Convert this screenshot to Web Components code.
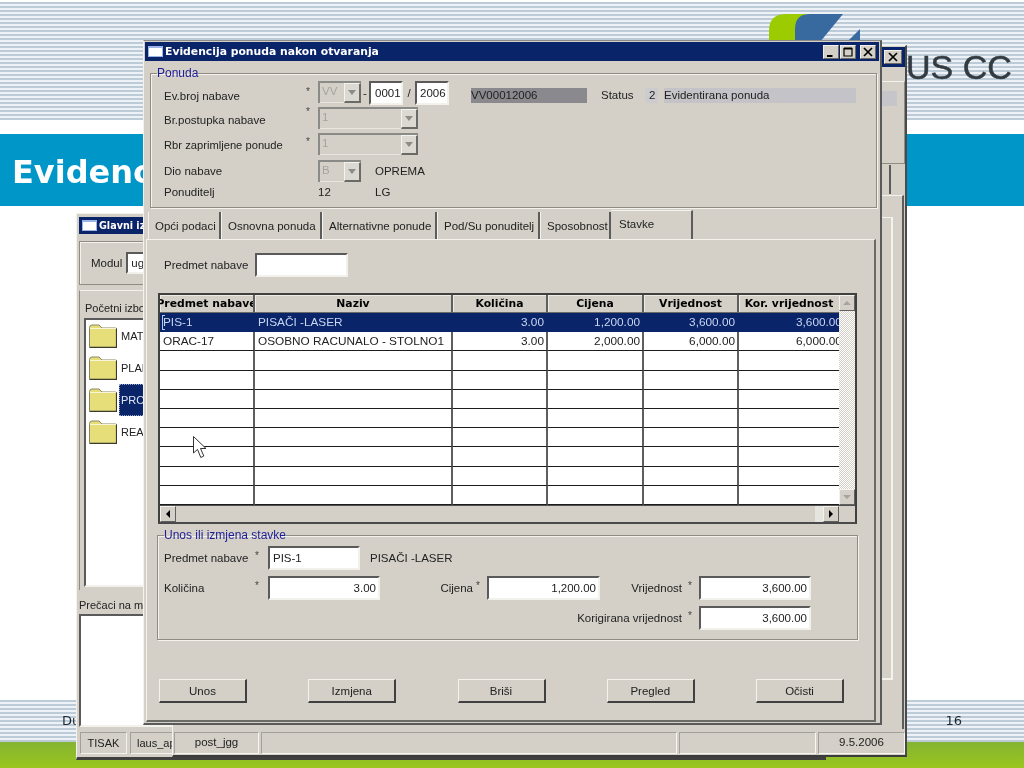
<!DOCTYPE html>
<html lang="hr">
<head>
<meta charset="utf-8">
<title>Evidencija ponuda</title>
<style>
  html, body { margin: 0; padding: 0; background: #fff; }
  body { font: 11.5px/14px "Liberation Sans", Arial, sans-serif; color: #222; }
  #stage { position: relative; width: 1024px; height: 768px; overflow: hidden; filter: blur(0.35px); }
</style>
</head>
<body>
<div id="stage">
  <slide-back></slide-back>
  <menu-window style="left:76px;top:213px"></menu-window>
  <back-window style="left:172px;top:45px"></back-window>
  <offer-window style="left:143px;top:40px"></offer-window>
  <mouse-arrow style="left:193px;top:436px"></mouse-arrow>
</div>

<script>
(() => {
    // small helper, every element is just a template cloned into an open shadow root
    function define(name, html, init) {
        let template = document.createElement("template");
        template.innerHTML = html;
        customElements.define(name, class extends HTMLElement {
            constructor() {
                super();
                this.attachShadow({mode: 'open'});
            }
            connectedCallback() {
                if (this.shadowRoot.childNodes.length) return;
                this.shadowRoot.appendChild(template.content.cloneNode(true));
                if (init) init(this, this.shadowRoot);
            }
        });
    }

    const FACE = "#d4d0c8";
    const NAVY = "#0a246a";

    // ---------- win32 bits ----------

    define("x-input", `
    <style>
    :host {
        display: flex; align-items: center; box-sizing: border-box; height: 24px;
        background: #fff; padding: 0 2px 1px 3px; overflow: hidden; white-space: nowrap;
        border: 2px solid; border-color: #5a5a5a #f2f1ec #f2f1ec #5a5a5a;
    }
    :host([right]) { justify-content: flex-end; }
    </style>
    <slot></slot>
    `);

    // disabled combo: only the arrow button gets the dark right and bottom edge
    define("x-combo", `
    <style>
    :host {
        display: flex; box-sizing: border-box; height: 22px; background: ${FACE}; color: #a4a4a0;
        border: solid; border-width: 2px 0 0 2px; border-color: #8a8a86;
        box-shadow: inset 0 -1px 0 #e8e6e0;
    }
    span { flex: 1; padding-left: 2px; line-height: 17px; overflow: hidden; }
    b {
        width: 17px; display: flex; align-items: center; justify-content: center;
        border: solid; border-width: 1px 2px 2px 1px; border-color: #f4f3ee #6a6a66 #6a6a66 #f4f3ee; box-sizing: border-box;
        background: #dcd9d2;
    }
    b::after {
        content: ""; border: 4px solid transparent; border-top: 5px solid #8c8c88; border-bottom: 0;
    }
    </style>
    <span><slot></slot></span><b></b>
    `);

    define("x-btn", `
    <style>
    :host {
        display: flex; align-items: center; justify-content: center; box-sizing: border-box;
        width: 88px; height: 24px; background: ${FACE};
        border: 2px solid; border-color: #f3f2ed #404040 #404040 #f3f2ed; border-width: 1px 2px 2px 1px;
    }
    </style>
    <slot></slot>
    `);

    // group box, the legend breaks the line by itself
    define("x-group", `
    <style>
    :host { display: block; box-sizing: border-box; }
    fieldset {
        margin: 0; height: 100%; box-sizing: border-box; padding: var(--pad, 1px 0 0 13px);
        border: 1px solid #908c84; box-shadow: 1px 1px 0 #f3f2ed, inset 1px 1px 0 #f3f2ed;
    }
    legend { padding: 0; margin-left: var(--leg, -7px); color: #1c1c96; line-height: 14px; font-size: 12px; }
    </style>
    <fieldset><legend><slot name="legend"></slot></legend><slot></slot></fieldset>
    `);

    define("x-tab", `
    <style>
    :host {
        display: flex; align-items: center; box-sizing: border-box; height: 27px; padding-left: 6px;
        border-left: 1px solid #f3f2ed; border-right: 2px solid #5c5c5c; white-space: nowrap;
    }
    :host([active]) {
        height: 29px; padding: 0 0 3px 8px; border-left: 0; border-top: 1px solid #f3f2ed;
    }
    </style>
    <slot></slot>
    `);

    define("title-bar", `
    <style>
    :host {
        display: flex; align-items: center; height: var(--bar-h, 19px); background: ${NAVY}; color: #fff;
        font: bold 10.8px/14px "DejaVu Sans", sans-serif; white-space: nowrap; overflow: hidden;
    }
    .ico {
        width: 15px; height: 11px; flex: none; margin: 0 2px 0 3px; background: #fff;
        border: 1px solid #9db4e6; border-top-width: 2px; box-sizing: border-box;
    }
    .txt { flex: 1; }
    .btns { display: flex; gap: 1px; margin-right: 3px; }
    </style>
    <div class="ico"></div>
    <div class="txt"><slot></slot></div>
    <div class="btns"><slot name="btn"></slot></div>
    `);

    define("cap-btn", `
    <style>
    :host {
        display: block; width: var(--w, 16px); height: 14px; background: ${FACE};
        border: 1px solid; border-color: #f0efe9 #6a6a66 #6a6a66 #f0efe9; box-sizing: border-box;
    }
    :host([kind="close"]) { margin-left: var(--cl, 3px); }
    svg { display: block; width: 100%; height: 100%; }
    </style>
    <svg viewBox="0 0 13 12" fill="none" stroke="#000"></svg>
    `, (el, root) => {
        let glyphs = {
            min: '<path d="M2.5 10h5.5" stroke-width="2"/>',
            max: '<path d="M2.5 2.5h8v7.5h-8z" stroke-width="1.2"/><path d="M2.5 2.5h8" stroke-width="2"/>',
            close: '<path d="M2.5 2l8 8M10.5 2l-8 8" stroke-width="1.7"/>'
        };
        root.querySelector("svg").innerHTML = glyphs[el.getAttribute("kind")];
    });

    define("yellow-folder", `
    <style>
    :host { display: block; width: 28px; height: 24px; flex: none; }
    svg { display: block; }
    </style>
    <svg width="28" height="24" viewBox="0 0 28 24">
      <path d="M.5 23V3.500Q.5 1 3 1h7l3 3h13.500q1 0 1 1v18z" fill="#e6de78" stroke="#8a8660"/>
      <path d="M1 4.500h26" stroke="#f8f6d8"/>
      <path d="M27.500 4.500V23.500H.5" fill="none" stroke="#3c3a28" stroke-width="1.2"/>
    </svg>
    `);

    // ---------- the table ----------

    const COLS = [
        ["Predmet nabave", 95], ["Naziv", 198], ["Količina", 95],
        ["Cijena", 96], ["Vrijednost", 95], ["Kor. vrijednost", 100]
    ];
    const ROWS = [
        ["PIS-1", "PISAČI -LASER", "3.00", "1,200.00", "3,600.00", "3,600.00"],
        ["ORAC-17", "OSOBNO RACUNALO - STOLNO1", "3.00", "2,000.00", "6,000.00", "6,000.00"]
    ];

    define("x-grid", `
    <style>
    :host {
        display: grid; box-sizing: border-box; width: 699px; height: 231px; font-size: 11.8px;
        border: 2px solid #404040; border-bottom-color: #4a4a4a; background: ${FACE};
        grid-template-columns: 679px 16px; grid-template-rows: 210px 17px;
    }
    .cells {
        display: grid; background: #fff; overflow: hidden;
        grid-template-rows: 18px repeat(10, 19.2px);
    }
    .c {
        box-sizing: border-box; display: flex; align-items: center; white-space: nowrap; overflow: hidden;
        border-right: 2px solid #5e5e5e; border-bottom: 1px solid #1c1c1c; padding: 0 2px 0 3px; min-width: 0;
    }
    .c:nth-child(6n) { border-right: 0; justify-content: flex-start; }
    .h {
        background: ${FACE}; justify-content: center; padding: 0; color: #000;
        font: bold 10.8px/14px "DejaVu Sans", sans-serif; border-bottom: 1px solid #6a6a66;
        box-shadow: inset 1px 1px 0 #ecebe5;
    }
    .c.h:nth-child(6n) { justify-content: center; }
    .n { justify-content: flex-end; }
    .c.n:nth-child(6n) { justify-content: flex-start; padding-left: 57px; }
    .sel { background: ${NAVY}; color: #c9d6f2; border-bottom-color: ${NAVY}; border-right-color: ${NAVY}; }
    .sel.first::before { content: ""; width: 2px; height: 13px; margin-right: -2px; margin-left: -1px;
        border: 1px solid #b8c8ec; border-right: 0; }
    .vs {
        display: flex; flex-direction: column; justify-content: space-between;
        background: repeating-conic-gradient(${FACE} 0 25%, #fff 0 50%) 0 0 / 2px 2px;
    }
    .hs { display: flex; justify-content: space-between; background: ${FACE}; border-top: 1px solid #505050; }
    .sb {
        width: 16px; height: 16px; background: ${FACE}; display: flex; align-items: center; justify-content: center;
        box-sizing: border-box; border: 1px solid; border-color: #f3f2ed #606060 #606060 #f3f2ed;
    }
    .up::after { content: ""; border: 4px solid transparent; border-bottom: 4px solid #a4a4a0; border-top: 0; }
    .dn::after { content: ""; border: 4px solid transparent; border-top: 4px solid #a4a4a0; border-bottom: 0; }
    .lf::after { content: ""; border: 4px solid transparent; border-right: 4px solid #000; border-left: 0; }
    .rt::after { content: ""; border: 4px solid transparent; border-left: 4px solid #000; border-right: 0; }
    .rt { box-shadow: -8px 0 0 #e6e4de; }
    .corner { background: ${FACE}; border-top: 1px solid #505050; }
    </style>
    <div class="cells"></div>
    <div class="vs"><div class="sb up"></div><div class="sb dn"></div></div>
    <div class="hs"><div class="sb lf"></div><div class="sb rt"></div></div>
    <div class="corner"></div>
    `, (el, root) => {
        let cells = root.querySelector(".cells");
        cells.style.gridTemplateColumns = COLS.map(c => c[1] + "px").join(" ");
        let add = (text, cls) => {
            let d = document.createElement("div");
            d.className = "c " + cls;
            let s = document.createElement("span");
            s.textContent = text;
            d.appendChild(s);
            cells.appendChild(d);
        };
        COLS.forEach(c => add(c[0], "h"));
        for (let r = 0; r < 10; r++) {
            for (let i = 0; i < 6; i++) {
                let cls = (i > 1 ? "n" : "") + (r === 0 ? " sel" : "") + (r === 0 && i === 0 ? " first" : "");
                add(ROWS[r] ? ROWS[r][i] : "", cls);
            }
        }
    });

    // ---------- slide behind the windows ----------

    const STRIPES = "repeating-linear-gradient(180deg, #bccbd8 0 2px, #eef2f6 2px 4px)";

    define("slide-back", `
    <style>
    :host {
        display: grid; width: 1024px; height: 768px; position: relative; background: #fff;
        grid-template-rows: 120px 14px 72px 1fr 42px 26px;
    }
    .stripes { background: ${STRIPES}; }
    .top { position: relative; margin-top: 2px; }
    .logo { position: absolute; left: 765px; top: 10px; }
    .company {
        position: absolute; left: 906px; top: 46px; color: #333b40;
        font: 34px/38px "Liberation Sans", sans-serif; white-space: nowrap; -webkit-text-stroke: .5px #333b40;
    }
    .band {
        grid-row: 3; background: #0096c8; color: #fff; display: flex; align-items: center; padding: 4px 0 0 12px;
        font: bold 32px/38px "DejaVu Sans", sans-serif; box-sizing: border-box;
    }
    .foot {
        grid-row: 5; display: flex; justify-content: space-between; align-items: center; padding: 0 62px;
        font: 13px/16px "DejaVu Sans", sans-serif; color: #1b2833;
    }
    .green { grid-row: 6; background: linear-gradient(180deg, #84b432, #9ac61e); }
    </style>
    <div class="stripes top">
      <svg class="logo" width="100" height="34" viewBox="765 12 100 34">
        <path d="M786 14H806V42H769V31Q769 14 786 14Z" fill="#9ccb00"/>
        <path d="M810 14H843L820 42H795V29Q795 14 810 14Z" fill="#38699f"/>
        <path d="M860 29V42H847Z" fill="#38699f"/>
      </svg>
      <div class="company">US CC</div>
    </div>
    <div class="band">Evidenc</div>
    <div class="stripes foot"><span>Du</span><span>16</span></div>
    <div class="green"></div>
    `);

    // ---------- windows ----------

    define("menu-window", `
    <style>
    :host {
        position: absolute; display: flex; flex-direction: column; box-sizing: border-box;
        width: 750px; height: 547px; background: ${FACE}; padding: 3px 2px 0 2px;
        border: 1px solid; border-color: #f3f2ed #404040 #404040 #f3f2ed; border-bottom-width: 3px;
    }
    title-bar { --bar-h: 17px; font-size: 9.6px; }
    .modul {
        margin-top: 7px; height: 44px; display: flex; align-items: center; padding-left: 11px; gap: 4px;
        box-sizing: border-box; border: 1px solid #908c84; box-shadow: inset 1px 1px 0 #f3f2ed;
    }
    .modul x-input { width: 200px; height: 22px; }
    .panel {
        margin-top: 5px; height: 300px; box-sizing: border-box; border-left: 1px solid #908c84;
        border-top: 1px solid #f3f2ed; padding: 10px 0 0 4px; display: flex; flex-direction: column;
    }
    .panel > span { height: 17px; flex: none; padding-left: 1px; font-size: 11px; }
    .tree {
        height: 269px; flex: none; background: #fff; box-sizing: border-box; padding: 4px 0 0 3px; display: flex; flex-direction: column; gap: 8px;
        border: 2px solid; border-color: #5a5a5a #f2f1ec #f2f1ec #5a5a5a;
    }
    .item { display: flex; align-items: center; gap: 2px; height: 24px; white-space: nowrap; font-size: 11px; }
    .item span { padding: 0 2px; line-height: 32px; }
    .item.on span { background: ${NAVY}; color: #dfe6f6; outline: 1px dotted #9aa7c8; outline-offset: -1px; }
    .short { height: 24px; display: flex; align-items: center; padding-top: 6px; box-sizing: border-box; font-size: 11px; }
    .box {
        height: 113px; background: #fff; box-sizing: border-box;
        border: 2px solid; border-color: #5a5a5a #f2f1ec #f2f1ec #5a5a5a;
    }
    .task { display: flex; gap: 3px; margin-top: 5px; padding-left: 1px; font-size: 11px; }
    .task span {
        height: 22px; line-height: 21px; box-sizing: border-box; text-align: center; width: 47px;
        border: 1px solid; border-color: #a0a09c #f3f2ed #f3f2ed #a0a09c;
    }
    .task span + span { width: 200px; text-align: left; padding-left: 6px; }
    </style>
    <title-bar>Glavni iz</title-bar>
    <div class="modul"><span>Modul</span><x-input>ug</x-input></div>
    <div class="panel">
      <span>Početni izbo</span>
      <div class="tree">
        <div class="item"><yellow-folder></yellow-folder><span>MAT</span></div>
        <div class="item"><yellow-folder></yellow-folder><span>PLAN</span></div>
        <div class="item on"><yellow-folder></yellow-folder><span>PRO</span></div>
        <div class="item"><yellow-folder></yellow-folder><span>REA</span></div>
      </div>
    </div>
    <div class="short">Prečaci na mo</div>
    <div class="box"></div>
    <div class="task"><span>TISAK</span><span>laus_ap</span></div>
    `);

    define("back-window", `
    <style>
    :host {
        position: absolute; display: flex; flex-direction: column; box-sizing: border-box;
        width: 735px; height: 712px; background: ${FACE}; padding-top: 1px;
        border: 1px solid #f3f2ed; border-right: 2px solid #4a4a4a; border-bottom: 2px solid #3c3c3c;
    }
    title-bar { --bar-h: 20px; }
    cap-btn { --w: 18px; --cl: 0; }
    .grp {
        margin-top: 14px; height: 83px; box-sizing: border-box; border-right: 1px solid #908c84; border-bottom: 1px solid #908c84;
        border-top: 1px solid #f3f2ed; display: flex; justify-content: flex-end; align-items: flex-start; padding: 9px 7px 0 0;
    }
    .grp i { display: block; width: 200px; height: 15px; background: #c6c6ca; }
    .tabs { height: 31px; box-sizing: border-box; padding: 1px 14px 0 0; display: flex; justify-content: flex-end; }
    .tabs i { display: block; width: 2px; height: 29px; background: #5c5c5c; }
    .page {
        height: 534px; box-sizing: border-box; margin-right: 1px; padding: 21px 9px 0 0;
        border-top: 1px solid #f3f2ed; border-right: 2px solid #5c5c5c;
    }
    .inner { height: 463px; box-sizing: border-box; border: 1px solid #f3f2ed; border-width: 1px 2px 2px 1px; }
    .status { display: flex; gap: 2px; padding: 3px 0 0 1px; }
    .status span {
        height: 22px; box-sizing: border-box; text-align: center; line-height: 19px;
        border: 1px solid; border-color: #a0a09c #f7f6f1 #f7f6f1 #a0a09c;
    }
    </style>
    <title-bar><cap-btn slot="btn" kind="close"></cap-btn></title-bar>
    <div class="grp"><i></i></div>
    <div class="tabs"><i></i></div>
    <div class="page"><div class="inner"></div></div>
    <div class="status">
      <span style="width:85px">post_jgg</span>
      <span style="width:416px"></span>
      <span style="width:137px"></span>
      <span style="width:87px">9.5.2006</span>
    </div>
    `);

    define("offer-window", `
    <style>
    :host {
        position: absolute; display: flex; flex-direction: column; box-sizing: border-box;
        width: 739px; height: 685px; background: ${FACE}; padding: 1px 1px 0 1px;
        border-left: 1px solid #f3f2ed; border-top: 1px solid #8a8a86;
        border-right: 2px solid #5a5a5a; border-bottom: 2px solid #5a5a5a;
    }
    .ponuda { margin: 5px 2px 0 5px; height: 142px; }
    .rows { display: grid; grid-template-rows: 26px 26px 27px 23px 18px; }
    .row { display: grid; grid-template-columns: 143px 11px 1fr; align-items: start; white-space: nowrap; }
    .row > label { padding-top: var(--ly, 7px); }
    .row > label.tight { font-size: 11.2px; }
    .row > em { font-style: normal; font-size: 10px; line-height: 10px; padding-top: var(--sy, 5px); color: #444; margin-left: -1px; }
    .line { display: flex; align-items: flex-start; }
    .sep { width: 8px; padding-top: 5px; text-align: center; }
    .gray { margin: 7px 0 0 22px; width: 116px; height: 15px; background: #8a8a8e; line-height: 15px; }
    .bar { height: 15px; line-height: 15px; margin-top: 7px; }
    .opt { padding: 4px 0 0 14px; }
    .tabs { display: flex; align-items: flex-end; height: 29px; margin: 2px 0 0 3px; }
    .page {
        display: flex; flex-direction: column; box-sizing: border-box; height: 483px; margin: 0 3px 0 1px;
        padding: 13px 0 0 11px; border-top: 1px solid #f3f2ed; border-right: 2px solid #6a6a66; border-left: 1px solid #f3f2ed;
        border-bottom: 2px solid #6a6a66;
    }
    .pick { display: flex; align-items: center; height: 24px; padding-left: 6px; }
    .pick span { width: 91px; }
    .pick x-input { width: 93px; }
    x-grid { margin-top: 16px; }
    .unos { margin: 4px 0 0 -1px; width: 701px; height: 112px; --pad: 0 0 0 6px; --leg: 0; }
    .form {
        display: grid; padding-top: 4px; white-space: nowrap; align-items: center;
        grid-template-columns: 91px 13px 112px 93px 14px 113px 82px 17px 112px;
        grid-template-rows: repeat(3, 30px);
    }
    .form span { margin-bottom: 6px; }
    .form em { font-style: normal; font-size: 10px; line-height: 10px; margin-top: -10px; color: #444; }
    .form .r { text-align: right; }
    .form x-input { margin-bottom: 6px; }
    .btns { display: flex; justify-content: space-between; width: 685px; margin: 39px 0 0 1px; }
    </style>
    <title-bar>Evidencija ponuda nakon otvaranja
      <cap-btn slot="btn" kind="min"></cap-btn><cap-btn slot="btn" kind="max"></cap-btn><cap-btn slot="btn" kind="close"></cap-btn>
    </title-bar>

    <x-group class="ponuda">
      <span slot="legend">Ponuda</span>
      <div class="rows">
        <div class="row">
          <label style="--ly:8px">Ev.broj nabave</label><em style="--sy:6px">*</em>
          <div class="line">
            <x-combo style="width:43px">VV</x-combo><span class="sep">-</span>
            <x-input style="width:34px;padding-left:4px">0001</x-input><span class="sep" style="width:12px">/</span>
            <x-input style="width:34px">2006</x-input>
            <span class="gray">VV00012006</span>
            <span class="bar" style="margin-left:14px;width:44px">Status</span>
            <span class="bar" style="width:13px;background:#ccccce;padding-left:4px;box-sizing:border-box">2</span>
            <span class="bar" style="margin-left:6px;width:192px;background:#c4c4c8">Evidentirana ponuda</span>
          </div>
        </div>
        <div class="row">
          <label style="--ly:6px">Br.postupka nabave</label><em style="--sy:0">*</em>
          <x-combo style="width:100px">1</x-combo>
        </div>
        <div class="row">
          <label class="tight" style="--ly:5px">Rbr zaprimljene ponude</label><em style="--sy:4px">*</em>
          <x-combo style="width:100px">1</x-combo>
        </div>
        <div class="row">
          <label style="--ly:4px">Dio nabave</label><em></em>
          <div class="line"><x-combo style="width:43px">B</x-combo><span class="opt">OPREMA</span></div>
        </div>
        <div class="row">
          <label style="--ly:2px">Ponuditelj</label><em></em>
          <div class="line"><span style="width:43px;padding-top:2px">12</span><span style="padding:2px 0 0 14px">LG</span></div>
        </div>
      </div>
    </x-group>

    <div class="tabs">
      <x-tab style="width:73px">Opći podaci</x-tab>
      <x-tab style="width:101px">Osnovna ponuda</x-tab>
      <x-tab style="width:115px">Alternativne ponude</x-tab>
      <x-tab style="width:103px">Pod/Su ponuditelj</x-tab>
      <x-tab style="width:71px">Sposobnost</x-tab>
      <x-tab active style="width:82px">Stavke</x-tab>
    </div>

    <div class="page">
      <div class="pick"><span>Predmet nabave</span><x-input></x-input></div>
      <x-grid></x-grid>
      <x-group class="unos">
        <span slot="legend">Unos ili izmjena stavke</span>
        <div class="form">
          <span>Predmet nabave</span><em>*</em><x-input style="width:92px">PIS-1</x-input>
          <span style="grid-column:4/10;padding-left:10px;margin-left:-20px">PISAČI -LASER</span>

          <span>Količina</span><em>*</em><x-input right>3.00</x-input>
          <span class="r">Cijena</span><em style="padding-left:3px">*</em><x-input right>1,200.00</x-input>
          <span class="r">Vrijednost</span><em style="padding-left:6px">*</em><x-input right>3,600.00</x-input>

          <span class="r" style="grid-column:1/8">Korigirana vrijednost</span><em style="padding-left:6px">*</em><x-input right>3,600.00</x-input>
        </div>
      </x-group>
      <div class="btns">
        <x-btn>Unos</x-btn><x-btn>Izmjena</x-btn><x-btn>Briši</x-btn><x-btn>Pregled</x-btn><x-btn>Očisti</x-btn>
      </div>
    </div>
    `);

    define("mouse-arrow", `
    <style>
    :host { position: absolute; display: block; width: 14px; height: 23px; }
    svg { display: block; }
    </style>
    <svg width="14" height="23" viewBox="0 0 14 23">
      <path d="M.5.5V17l4-3.600L7.800 21.500l3-1.500-3.300-7.500H13Z" fill="#fff" stroke="#333" stroke-width="1" stroke-linejoin="round"/>
    </svg>
    `);
})();
</script>
</body>
</html>
